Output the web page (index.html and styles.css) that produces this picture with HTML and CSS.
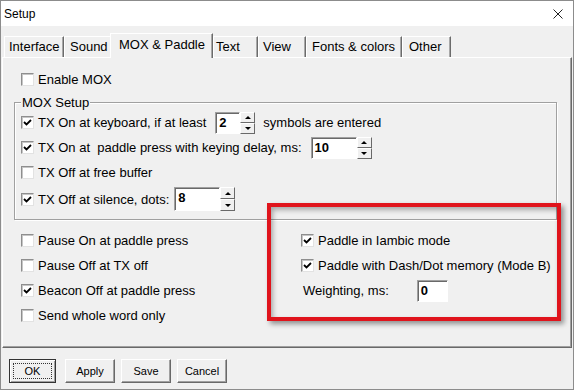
FILE: index.html
```html
<!DOCTYPE html>
<html>
<head>
  <title>Setup</title>
  <link rel="stylesheet" href="styles.css">
</head>
<body>
  <div class="window">
    <div class="titlebar">
      <span class="title">Setup</span>
      <svg class="close" width="10" height="10" viewBox="0 0 10 10"><path d="M0.5 0.5 L9.5 9.5 M9.5 0.5 L0.5 9.5" stroke="#222" stroke-width="1" fill="none"/></svg>
    </div>

    <div class="tabs">
      <div class="tab tab-interface">Interface</div>
      <div class="tab tab-sound">Sound</div>
      <div class="tab tab-mox active">MOX &amp; Paddle</div>
      <div class="tab tab-text">Text</div>
      <div class="tab tab-view">View</div>
      <div class="tab tab-fonts">Fonts &amp; colors</div>
      <div class="tab tab-other">Other</div>
    </div>

    <div class="page">
      <div class="check-row enable-row">
        <span class="check"></span><span class="label">Enable MOX</span>
      </div>

      <fieldset class="group">
        <legend>MOX Setup</legend>
        <div class="check-row">
          <span class="check"><svg viewBox="0 0 11 11"><polyline points="2,5 4.5,7.5 9,3"/></svg></span>
          <span class="label">TX On at keyboard, if at least</span>
          <div class="spin spin-keyboard">
            <span class="spin-field">2</span>
            <span class="spin-arrows"><span class="up"></span><span class="down"></span></span>
          </div>
          <span class="label">symbols are entered</span>
        </div>
        <div class="check-row">
          <span class="check"><svg viewBox="0 0 11 11"><polyline points="2,5 4.5,7.5 9,3"/></svg></span>
          <span class="label">TX On at  paddle press with keying delay, ms:</span>
          <div class="spin spin-delay">
            <span class="spin-field wide">10</span>
            <span class="spin-arrows"><span class="up"></span><span class="down"></span></span>
          </div>
        </div>
        <div class="check-row">
          <span class="check"></span><span class="label">TX Off at free buffer</span>
        </div>
        <div class="check-row dots-row">
          <span class="check"><svg viewBox="0 0 11 11"><polyline points="2,5 4.5,7.5 9,3"/></svg></span>
          <span class="label">TX Off at silence, dots:</span>
          <div class="spin spin-dots">
            <span class="spin-field wide">8</span>
            <span class="spin-arrows"><span class="up"></span><span class="down"></span></span>
          </div>
        </div>
      </fieldset>

      <div class="lower">
        <div class="col">
          <div class="check-row"><span class="check"></span><span class="label">Pause On at paddle press</span></div>
          <div class="check-row"><span class="check"></span><span class="label">Pause Off at TX off</span></div>
          <div class="check-row">
            <span class="check"><svg viewBox="0 0 11 11"><polyline points="2,5 4.5,7.5 9,3"/></svg></span>
            <span class="label">Beacon Off at paddle press</span>
          </div>
          <div class="check-row"><span class="check"></span><span class="label">Send whole word only</span></div>
        </div>
        <div class="col">
          <div class="check-row">
            <span class="check"><svg viewBox="0 0 11 11"><polyline points="2,5 4.5,7.5 9,3"/></svg></span>
            <span class="label">Paddle in Iambic mode</span>
          </div>
          <div class="check-row">
            <span class="check"><svg viewBox="0 0 11 11"><polyline points="2,5 4.5,7.5 9,3"/></svg></span>
            <span class="label">Paddle with Dash/Dot memory (Mode B)</span>
          </div>
          <div class="check-row weight-row">
            <span class="label">Weighting, ms:</span>
            <span class="spin-field weight">0</span>
          </div>
        </div>
      </div>
    </div>

    <div class="buttons">
      <button class="btn default">OK</button>
      <button class="btn">Apply</button>
      <button class="btn">Save</button>
      <button class="btn">Cancel</button>
    </div>

    <div class="annotation"></div>
  </div>
</body>
</html>
```

FILE: styles.css
```css
* {
  box-sizing: border-box;
}
body {
  margin: 0;
  font-family: "Liberation Sans", Arial, sans-serif;
  font-size: 13px;
  color: #000;
}
.window {
  position: relative;
  width: 574px;
  height: 390px;
  border: 1px solid #8c8c8c;
  background: #f0f0f0;
}

/* title bar */
.titlebar {
  height: 25px;
  background: #fff;
  display: flex;
  align-items: center;
  justify-content: space-between;
  padding: 0 10px 0 3px;
  font-size: 12px;
}

/* tab strip */
.tabs {
  display: flex;
  align-items: flex-end;
  height: 31px;
  padding-left: 3px;
}
.tab {
  height: 21px;
  line-height: 19px;
  padding-left: 5px;
  white-space: nowrap;
  border-top: 1px solid #fff;
  border-left: 1px solid #fff;
  border-right: 1px solid #6b6b6b;
  box-shadow: inset -1px 0 0 #a8a8a8;
}
.tab.active {
  position: relative;
  z-index: 1;
  height: 25px;
  line-height: 21px;
  margin: 0 0 -1px -2px;
  padding-left: 8px;
  background: #f0f0f0;
}
.tab-interface { width: 60px; padding-left: 4px; }
.tab-sound { width: 48px; }
.tab-mox { width: 103px; }
.tab-text { width: 45px; padding-left: 2px; }
.tab-view { width: 48px; padding-left: 4px; }
.tab-fonts { width: 96px; }
.tab-other { width: 49px; padding-left: 6px; }

/* page */
.page {
  height: 291px;
  margin: 0 1px;
  padding: 9px 0 0 11px;
  border-top: 1px solid #fff;
  border-left: 1px solid #fff;
  border-right: 1px solid #696969;
  border-bottom: 1px solid #696969;
  box-shadow: inset -1px -1px 0 #a0a0a0;
}
.check-row {
  display: flex;
  align-items: center;
  height: 25px;
}
.enable-row {
  margin-left: 7px;
}
.dots-row {
  height: 28px;
}
.label {
  white-space: pre;
}
.check {
  width: 13px;
  height: 13px;
  margin-right: 4px;
  flex: none;
  background: #fff;
  border: 1px solid;
  border-color: #8e8e8e #e2e2e2 #e2e2e2 #8e8e8e;
  box-shadow: inset 1px 1px 0 #c6c6c6;
}
.check svg {
  display: block;
  width: 11px;
  height: 11px;
}
.check polyline {
  fill: none;
  stroke: #000;
  stroke-width: 1.8;
}

/* group box */
.group {
  width: 543px;
  margin: 3px 0 0 0;
  padding: 0 6px 6px 6px;
  min-width: 0;
  border: 1px solid #a0a0a0;
  box-shadow: inset 1px 1px 0 #fff, 1px 1px 0 #fff;
}
.group legend {
  padding: 0 1px;
  line-height: 15px;
  background: #f0f0f0;
}

/* spin boxes */
.spin {
  display: flex;
  height: 22px;
  margin-left: 9px;
  margin-right: 8px;
}
.spin-dots {
  height: 24px;
  margin-left: 5px;
}
.spin-field {
  width: 25px;
  height: 100%;
  padding-left: 3px;
  line-height: 20px;
  font-weight: bold;
  background: #fff;
  border: 1px solid;
  border-color: #a0a0a0 #fff #fff #a0a0a0;
  box-shadow: inset 1px 1px 0 #696969;
}
.spin-field.wide {
  width: 46px;
}
.spin-arrows {
  width: 15px;
  display: flex;
  flex-direction: column;
}
.spin-arrows span {
  flex: 1;
  display: flex;
  align-items: center;
  justify-content: center;
  background: #f0f0f0;
  border: 1px solid;
  border-color: #fff #696969 #696969 #fff;
}
.spin-arrows span::before {
  content: "";
  border-left: 3px solid transparent;
  border-right: 3px solid transparent;
  border-bottom: 3px solid #000;
}
.spin-arrows .down::before {
  border-bottom: 0;
  border-top: 3px solid #000;
}

/* lower part */
.lower {
  display: grid;
  grid-template-columns: 280px 1fr;
  margin-top: 8px;
  padding-left: 7px;
}
.weight-row {
  padding-left: 2px;
}
.spin-field.weight {
  width: 31px;
  height: 22px;
  margin-left: 28px;
}

/* dialog buttons */
.buttons {
  display: flex;
  gap: 6px;
  padding: 11px 0 0 8px;
}
.btn {
  width: 50px;
  height: 24px;
  padding: 0;
  font-family: "Liberation Sans", Arial, sans-serif;
  font-size: 11px;
  color: #000;
  background: #f0f0f0;
  border: 1px solid;
  border-color: #fff #696969 #696969 #fff;
  box-shadow: inset -1px -1px 0 #a0a0a0;
}
.btn.default {
  width: 47px;
  margin-right: 3px;
  border-color: #333;
  box-shadow: inset 1px 1px 0 #fff, inset -1px -1px 0 #a0a0a0;
  outline: 1px dotted #333;
  outline-offset: -5px;
}

/* red highlight drawn over the dialog */
.annotation {
  position: absolute;
  left: 266px;
  top: 202px;
  width: 294px;
  height: 118px;
  border: 4px solid #e0141c;
  box-shadow: 3px 3px 5px rgba(0, 0, 0, 0.4), inset 2px 3px 5px rgba(0, 0, 0, 0.3);
  pointer-events: none;
}
```
